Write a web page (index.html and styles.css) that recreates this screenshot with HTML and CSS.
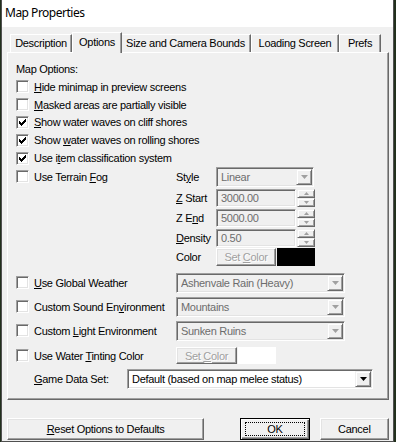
FILE: index.html
```html
<!DOCTYPE html>
<html>
<head>
<meta charset="utf-8">
<title>Map Properties</title>
<link rel="stylesheet" href="styles.css">
</head>
<body>
<div class="window">
  <div class="titlebar">Map Properties</div>
  <div class="client">
    <div class="tabs">
      <div class="tab t-desc">Description</div>
      <div class="tab sel t-opt">Options</div>
      <div class="tab t-size">Size and Camera Bounds</div>
      <div class="tab t-load">Loading Screen</div>
      <div class="tab t-prefs">Prefs</div>
    </div>
    <div class="panel">
      <div class="heading">Map Options:</div>
      <div class="cb-row"><span class="cb"></span><span><u>H</u>ide minimap in preview screens</span></div>
      <div class="cb-row"><span class="cb"></span><span><u>M</u>asked areas are partially visible</span></div>
      <div class="cb-row"><span class="cb checked"><svg width="7" height="7" viewBox="0 0 7 7" shape-rendering="crispEdges"><path d="M0 2h1v3h-1z M1 3h1v3h-1z M2 4h1v3h-1z M3 3h1v3h-1z M4 2h1v3h-1z M5 1h1v3h-1z M6 0h1v3h-1z" fill="#000"/></svg></span><span><u>S</u>how water waves on cliff shores</span></div>
      <div class="cb-row"><span class="cb checked"><svg width="7" height="7" viewBox="0 0 7 7" shape-rendering="crispEdges"><path d="M0 2h1v3h-1z M1 3h1v3h-1z M2 4h1v3h-1z M3 3h1v3h-1z M4 2h1v3h-1z M5 1h1v3h-1z M6 0h1v3h-1z" fill="#000"/></svg></span><span>Show <u>w</u>ater waves on rolling shores</span></div>
      <div class="cb-row"><span class="cb checked"><svg width="7" height="7" viewBox="0 0 7 7" shape-rendering="crispEdges"><path d="M0 2h1v3h-1z M1 3h1v3h-1z M2 4h1v3h-1z M3 3h1v3h-1z M4 2h1v3h-1z M5 1h1v3h-1z M6 0h1v3h-1z" fill="#000"/></svg></span><span>Use i<u>t</u>em classification system</span></div>

      <div class="fog">
        <div class="fog-left">
          <div class="cb-row tall"><span class="cb"></span><span>Use Terrain <u>F</u>og</span></div>
        </div>
        <div class="fog-grid">
          <div class="frow r-style">
            <span class="flabel">St<u>y</u>le</span>
            <div class="combo dis w-style"><span class="cval">Linear</span><span class="cbtn"><svg width="7" height="4" viewBox="0 0 7 4"><path d="M0 0h7l-3.5 4z" fill="#a0a0a0"/></svg></span></div>
          </div>
          <div class="frow r-num">
            <span class="flabel"><u>Z</u> Start</span>
            <div class="tbox">3000.00</div>
            <div class="spin"><span class="sbtn"><svg width="5" height="3" viewBox="0 0 5 3"><path d="M0 3h5l-2.5-3z" fill="#a0a0a0"/></svg></span><span class="sbtn"><svg width="5" height="3" viewBox="0 0 5 3"><path d="M0 0h5l-2.5 3z" fill="#a0a0a0"/></svg></span></div>
          </div>
          <div class="frow r-num">
            <span class="flabel">Z E<u>n</u>d</span>
            <div class="tbox">5000.00</div>
            <div class="spin"><span class="sbtn"><svg width="5" height="3" viewBox="0 0 5 3"><path d="M0 3h5l-2.5-3z" fill="#a0a0a0"/></svg></span><span class="sbtn"><svg width="5" height="3" viewBox="0 0 5 3"><path d="M0 0h5l-2.5 3z" fill="#a0a0a0"/></svg></span></div>
          </div>
          <div class="frow r-num">
            <span class="flabel"><u>D</u>ensity</span>
            <div class="tbox">0.50</div>
            <div class="spin"><span class="sbtn"><svg width="5" height="3" viewBox="0 0 5 3"><path d="M0 3h5l-2.5-3z" fill="#a0a0a0"/></svg></span><span class="sbtn"><svg width="5" height="3" viewBox="0 0 5 3"><path d="M0 0h5l-2.5 3z" fill="#a0a0a0"/></svg></span></div>
          </div>
          <div class="frow r-color">
            <span class="flabel">Color</span>
            <div class="btn dis setcolor"><span>Set <u>C</u>olor</span></div>
            <div class="swatch black"></div>
          </div>
        </div>
      </div>

      <div class="lower">
        <div class="lrow r-weather">
          <div class="cb-row lleft"><span class="cb"></span><span><u>U</u>se Global Weather</span></div>
          <div class="combo dis w-wide"><span class="cval">Ashenvale Rain (Heavy)</span><span class="cbtn"><svg width="7" height="4" viewBox="0 0 7 4"><path d="M0 0h7l-3.5 4z" fill="#a0a0a0"/></svg></span></div>
        </div>
        <div class="lrow r-sound">
          <div class="cb-row lleft"><span class="cb"></span><span>Custom Sound En<u>v</u>ironment</span></div>
          <div class="combo dis w-wide"><span class="cval">Mountains</span><span class="cbtn"><svg width="7" height="4" viewBox="0 0 7 4"><path d="M0 0h7l-3.5 4z" fill="#a0a0a0"/></svg></span></div>
        </div>
        <div class="lrow r-light">
          <div class="cb-row lleft"><span class="cb"></span><span>Custom <u>L</u>ight Environment</span></div>
          <div class="combo dis w-wide"><span class="cval">Sunken Ruins</span><span class="cbtn"><svg width="7" height="4" viewBox="0 0 7 4"><path d="M0 0h7l-3.5 4z" fill="#a0a0a0"/></svg></span></div>
        </div>
        <div class="lrow r-water">
          <div class="cb-row lleft"><span class="cb"></span><span>Use Water <u>T</u>inting Color</span></div>
          <div class="btn dis setcolor2"><span>Set <u>C</u>olor</span></div>
          <div class="swatch white"></div>
        </div>
        <div class="lrow r-game">
          <span class="glabel"><u>G</u>ame Data Set:</span>
          <div class="combo w-game"><span class="cval">Default (based on map melee status)</span><span class="cbtn"><svg width="7" height="4" viewBox="0 0 7 4"><path d="M0 0h7l-3.5 4z" fill="#000"/></svg></span></div>
        </div>
      </div>
    </div>

    <div class="footer">
      <div class="btn reset"><span><u>R</u>eset Options to Defaults</span></div>
      <div class="btn default ok"><span class="focus">OK</span></div>
      <div class="btn cancel">Cancel</div>
    </div>
  </div>
</div>
</body>
</html>
```
FILE: styles.css
```css
* { box-sizing: border-box; }
html, body { margin: 0; padding: 0; }
body {
  width: 396px;
  height: 442px;
  overflow: hidden;
  background: #22301d;
  font-family: "Liberation Sans", Arial, sans-serif;
  font-size: 11px;
  letter-spacing: -0.3px;
  color: #000;
}
u { text-decoration: underline; text-underline-offset: 1px; }

.window {
  margin-left: 1px;
  width: 393px;
  height: 442px;
  background: #f0f0f0;
  border-left: 1px solid #505050;
  border-right: 1px solid #505050;
  border-bottom: 1px solid #505050;
  display: flex;
  flex-direction: column;
}
.titlebar {
  height: 27px;
  background: #fff;
  font-family: "Noto Sans", "Open Sans", sans-serif;
  font-size: 12px;
  letter-spacing: -0.5px;
  line-height: 26px;
  padding-left: 3px;
  color: #000;
}
.client {
  padding: 5px 4px 0 5px;
}

/* tabs */
.tabs {
  display: flex;
  align-items: flex-end;
  height: 21px;
  padding-left: 3px;
}
.tab {
  height: 18px;
  margin-bottom: 1px;
  border-top: 1px solid #fff;
  border-left: 1px solid #fff;
  border-right: 1px solid #696969;
  box-shadow: inset -1px 0 #a0a0a0;
  text-align: center;
  line-height: 17px;
  white-space: nowrap;
  background: #f0f0f0;
}
.t-desc { width: 62px; }
.t-opt { width: 50px; margin-right: -2px; }
.t-size { width: 131px; }
.t-load { width: 88px; }
.t-prefs { width: 42px; }
.tab.sel {
  height: 21px;
  margin-bottom: 0;
  line-height: 19px;
  position: relative;
  z-index: 1;
}

/* panel */
.panel {
  margin-top: -1px;
  height: 348px;
  border: 1px solid;
  border-color: #fff #696969 #696969 #fff;
  box-shadow: inset -1px -1px #a0a0a0;
  padding-left: 8px;
}
.heading {
  margin-top: 7px;
  height: 18px;
  line-height: 18px;
}
.cb-row {
  display: flex;
  align-items: center;
  height: 17.8px;
  white-space: nowrap;
}
.cb-row.tall { height: 20px; }
.cb {
  width: 13px;
  height: 13px;
  flex: none;
  margin-right: 5px;
  background: #fff;
  border: 1px solid;
  border-color: #a0a0a0 #fff #fff #a0a0a0;
  box-shadow: inset 1px 1px #696969, inset -1px -1px #e3e3e3;
  display: flex;
  align-items: center;
  justify-content: center;
}
.cb svg { display: block; }

/* fog */
.fog {
  display: flex;
  align-items: flex-start;
  height: 99px;
}
.fog-left { width: 160px; }
.fog-grid {
  display: flex;
  flex-direction: column;
}
.frow {
  display: flex;
  align-items: center;
}
.r-style { height: 20px; }
.r-num { height: 18px; margin-top: 2px; }
.r-color { height: 18px; margin-top: 1px; }
.flabel {
  width: 40px;
  white-space: nowrap;
}
.combo {
  height: 20px;
  display: flex;
  align-items: center;
  border: 1px solid;
  border-color: #a0a0a0 #fff #fff #a0a0a0;
  box-shadow: inset 1px 1px #696969, inset -1px -1px #e3e3e3;
  padding: 1px 1px 1px 4px;
  background: #fff;
  white-space: nowrap;
}
.combo.dis { background: #f0f0f0; color: #6d6d6d; }
.cval { flex: 1; overflow: hidden; }
.cbtn {
  width: 16px;
  height: 16px;
  flex: none;
  display: flex;
  align-items: center;
  justify-content: center;
  border: 1px solid;
  border-color: #f0f0f0 #696969 #696969 #f0f0f0;
  box-shadow: inset 1px 1px #fff, inset -1px -1px #a0a0a0;
  background: #f0f0f0;
}
.cbtn svg, .sbtn svg { display: block; }
.w-style { width: 98px; }
.w-wide { width: 169px; }
.w-game { width: 246px; }
.tbox {
  width: 80px;
  height: 18px;
  border: 1px solid;
  border-color: #a0a0a0 #fff #fff #a0a0a0;
  box-shadow: inset 1px 1px #696969, inset -1px -1px #e3e3e3;
  background: #f0f0f0;
  color: #6d6d6d;
  padding-left: 4px;
  line-height: 16px;
}
.spin {
  margin-left: 1px;
  width: 18px;
  height: 18px;
  display: flex;
  flex-direction: column;
}
.sbtn {
  height: 9px;
  display: flex;
  align-items: center;
  justify-content: center;
  border: 1px solid;
  border-color: #f0f0f0 #696969 #696969 #f0f0f0;
  box-shadow: inset 1px 1px #fff, inset -1px -1px #a0a0a0;
  background: #f0f0f0;
}

/* buttons */
.btn {
  display: flex;
  align-items: center;
  justify-content: center;
  border: 1px solid;
  border-color: #fff #696969 #696969 #fff;
  box-shadow: inset -1px -1px #a0a0a0, inset 1px 1px #e3e3e3;
  background: #f0f0f0;
  white-space: nowrap;
}
.btn.dis { color: #a0a0a0; text-shadow: 1px 1px 0 #fff; }
.setcolor { width: 60px; height: 18px; }
.swatch { height: 18px; width: 38px; margin-left: 1px; }
.swatch.black { background: #000; }
.swatch.white { background: #fff; height: 17px; }

/* lower */
.lower { margin-top: 7px; }
.lrow {
  display: flex;
  align-items: center;
  height: 20px;
  margin-top: 4px;
}
.r-weather { margin-top: 0; }
.r-water { margin-top: 5px; }
.r-game { margin-top: 3px; }
.lleft { width: 160px; height: 20px; }
.setcolor2 { width: 61px; height: 17px; }
.glabel { width: 111px; padding-left: 18px; white-space: nowrap; }

/* footer */
.footer {
  display: flex;
  margin-top: 18px;
  height: 22px;
}
.reset { width: 199px; height: 22px; }
.ok {
  width: 70px;
  height: 22px;
  margin-left: 36px;
  border: 1px solid #000;
  box-shadow: inset 1px 1px #fff, inset -1px -1px #696969, inset -2px -2px #a0a0a0;
}
.focus {
  width: 60px;
  height: 14px;
  border: 1px dotted #000;
  display: flex;
  align-items: center;
  justify-content: center;
}
.cancel { width: 70px; height: 22px; margin-left: 10px; }
```
